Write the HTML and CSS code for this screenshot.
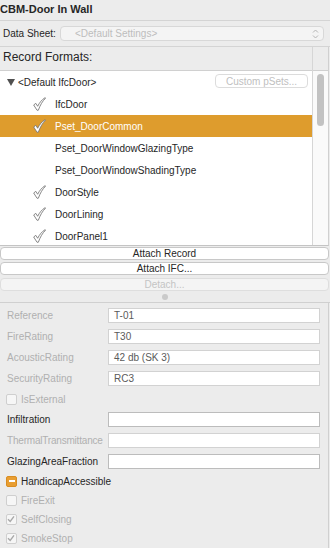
FILE: index.html
```html
<!DOCTYPE html>
<html>
<head>
    <meta charset="UTF-8">
    <title>CBM-Door In Wall</title>
    <link rel="stylesheet" href="styles.css">
</head>
<body>
    <div class="title">CBM-Door In Wall</div>

    <div class="sheet-row">
        <span class="sheet-label">Data Sheet:</span>
        <div class="popup">
            <span>&lt;Default Settings&gt;</span>
            <svg class="popup-arrows" width="7" height="12" viewBox="0 0 7 12">
                <path d="M1 4.5 L3.5 2 L6 4.5 M1 7.5 L3.5 10 L6 7.5" fill="none" stroke="#b5b5b5" stroke-width="1"/>
            </svg>
        </div>
    </div>

    <div class="list">
        <div class="list-main">
            <div class="list-header">Record Formats:</div>
            <div class="list-body">
                <div class="row">
                    <span class="triangle"></span>
                    <span class="row-text">&lt;Default IfcDoor&gt;</span>
                    <button class="custom-btn">Custom pSets...</button>
                </div>
                <div class="row"><span class="check"></span><span class="row-text">IfcDoor</span></div>
                <div class="row selected"><span class="check"></span><span class="row-text">Pset_DoorCommon</span></div>
                <div class="row"><span class="nocheck"></span><span class="row-text">Pset_DoorWindowGlazingType</span></div>
                <div class="row"><span class="nocheck"></span><span class="row-text">Pset_DoorWindowShadingType</span></div>
                <div class="row"><span class="check"></span><span class="row-text">DoorStyle</span></div>
                <div class="row"><span class="check"></span><span class="row-text">DoorLining</span></div>
                <div class="row"><span class="check"></span><span class="row-text">DoorPanel1</span></div>
            </div>
        </div>
        <div class="scroll-col">
            <div class="scroll-head"></div>
            <div class="scroll-track"><div class="thumb"></div></div>
        </div>
    </div>

    <div class="buttons">
        <button class="wide-btn">Attach Record</button>
        <button class="wide-btn">Attach IFC...</button>
        <button class="wide-btn disabled">Detach...</button>
    </div>
    <div class="splitter"><span class="dot"></span></div>

    <div class="fields">
        <div class="field"><span class="field-label dim">Reference</span><span class="input">T-01</span></div>
        <div class="field"><span class="field-label dim">FireRating</span><span class="input">T30</span></div>
        <div class="field"><span class="field-label dim">AcousticRating</span><span class="input">42 db (SK 3)</span></div>
        <div class="field"><span class="field-label dim">SecurityRating</span><span class="input">RC3</span></div>
        <div class="cb-row first dim"><span class="box"></span>IsExternal</div>
        <div class="field"><span class="field-label">Infiltration</span><span class="input edit"></span></div>
        <div class="field"><span class="field-label dim narrow">ThermalTransmittance</span><span class="input"></span></div>
        <div class="field"><span class="field-label">GlazingAreaFraction</span><span class="input edit"></span></div>
        <div class="cb-row"><span class="box mixed"></span>HandicapAccessible</div>
        <div class="cb-row dim"><span class="box"></span>FireExit</div>
        <div class="cb-row dim"><span class="box ticked"></span>SelfClosing</div>
        <div class="cb-row dim"><span class="box ticked"></span>SmokeStop</div>
    </div>

    <script>
        // draw the hand-written style check marks
        const checkSvg = '<svg width="13" height="14" viewBox="0 0 12 13">' +
            '<path d="M0.6 7.4 L2.6 5.9 L4.3 8.6 C6 5.2 8.2 2.4 11.3 0.6 L11.5 1.3 C8.9 3.6 6.7 7.4 4.9 12.3 L3.7 12.3 Z" ' +
            'fill="#ffffff" stroke="#767676" stroke-width="0.8" stroke-linejoin="round"/></svg>';
        document.querySelectorAll('.check').forEach(el => { el.innerHTML = checkSvg; });

        const tickSvg = '<svg width="10" height="10" viewBox="0 0 10 10">' +
            '<path d="M2 5.2 L4.2 7.4 L8 2.4" fill="none" stroke="#a8a8a8" stroke-width="1.4"/></svg>';
        document.querySelectorAll('.box.ticked').forEach(el => { el.innerHTML = tickSvg; });
    </script>
</body>
</html>
```

FILE: styles.css
```css
body {
    margin: 0;
    width: 330px;
    height: 548px;
    overflow: hidden;
    background-color: #ececec;
    color: #262626;
    font-family: "Liberation Sans", Arial, sans-serif;
    font-size: 10px;
}
button {
    font-family: inherit;
    font-size: 10px;
    padding: 0;
    margin: 0;
}
.title {
    height: 20px;
    line-height: 19px;
    font-weight: bold;
    font-size: 11px;
    border-bottom: 1px solid #d4d4d4;
}
.sheet-row {
    height: 25px;
    display: flex;
    align-items: center;
    border-bottom: 1px solid #d4d4d4;
}
.sheet-label {
    width: 53px;
    padding-left: 3px;
}
.popup {
    margin-left: 4px;
    height: 13px;
    border: 1px solid #d8d8d8;
    border-radius: 4px;
    background-color: #f4f4f4;
    color: #bdbdbd;
    display: flex;
    align-items: center;
    justify-content: space-between;
    padding-left: 14px;
    padding-right: 4px;
    width: 244px;
}
.popup-arrows {
    display: block;
}

/* record list */
.list {
    display: flex;
    width: 328px;
    height: 198px;
    border-right: 1px solid #d0d0d0;
    border-bottom: 1px solid #c4c4c4;
}
.list-main {
    width: 313px;
    display: flex;
    flex-direction: column;
}
.list-header {
    height: 23px;
    line-height: 21px;
    padding-left: 3px;
    font-size: 12px;
    border-bottom: 1px solid #d0d0d0;
}
.list-body {
    flex: 1;
    background-color: #fff;
    overflow: hidden;
}
.row {
    height: 22px;
    display: flex;
    align-items: center;
    position: relative;
}
.row.selected {
    background-color: #de9c2d;
    color: #fff;
}
.row-text {
    padding-top: 1px;
}
.triangle {
    width: 0;
    height: 0;
    margin-left: 7px;
    margin-right: 3px;
    border-left: 4px solid transparent;
    border-right: 4px solid transparent;
    border-top: 7px solid #505050;
}
.check, .nocheck {
    width: 13px;
    height: 14px;
    margin-left: 33px;
    margin-right: 9px;
}
.check svg {
    display: block;
}
.custom-btn {
    position: absolute;
    left: 215px;
    top: 3px;
    width: 93px;
    height: 14px;
    border: 1px solid #dcdcdc;
    border-radius: 4px;
    background-color: #fff;
    color: #c0c0c0;
}
.scroll-col {
    width: 15px;
    display: flex;
    flex-direction: column;
    border-left: 1px solid #d6d6d6;
}
.scroll-head {
    height: 23px;
    border-bottom: 1px solid #d0d0d0;
}
.scroll-track {
    flex: 1;
    background-color: #fafafa;
    padding-top: 3px;
}
.thumb {
    width: 7px;
    height: 52px;
    margin-left: 4px;
    border-radius: 4px;
    background-color: #c2c2c2;
}

/* buttons */
.buttons {
    display: flex;
    flex-direction: column;
    gap: 2px;
    padding-top: 1px;
}
.wide-btn {
    width: 329px;
    height: 13px;
    line-height: 11px;
    border: 1px solid #c8c8c8;
    border-radius: 4px;
    background-color: #fff;
    color: #262626;
}
.wide-btn.disabled {
    background-color: #f4f4f4;
    color: #c4c4c4;
    border-color: #dedede;
    margin-top: 1px;
}
.splitter {
    height: 11px;
    display: flex;
    justify-content: center;
    align-items: center;
    border-bottom: 1px solid #d0d0d0;
}
.dot {
    width: 6px;
    height: 6px;
    border-radius: 50%;
    background-color: #cacaca;
}

/* property fields */
.fields {
    width: 328px;
    height: 250px;
    border-right: 1px solid #d0d0d0;
    padding-top: 5px;
    display: flex;
    flex-direction: column;
    gap: 6px;
}
.field {
    height: 15px;
    display: flex;
    align-items: center;
}
.field-label {
    width: 101px;
    padding-left: 7px;
    color: #262626;
    white-space: nowrap;
}
.field-label.narrow {
    letter-spacing: -0.2px;
}
.dim {
    color: #b0b0b0;
}
.field-label.dim {
    color: #b0b0b0;
}
.input {
    width: 205px;
    height: 13px;
    line-height: 13px;
    padding-left: 5px;
    border: 1px solid #d2d2d2;
    background-color: #fff;
    color: #5a5a5a;
}
.input.edit {
    border-color: #bcbcbc;
}
.cb-row {
    height: 14px;
    display: flex;
    align-items: center;
    padding-left: 6px;
    margin-top: -1px;
}
.cb-row.first {
    margin-top: 0;
}
.box {
    width: 9px;
    height: 9px;
    margin-right: 4px;
    border: 1px solid #cfcfcf;
    border-radius: 2px;
    background-color: #f6f6f6;
    display: flex;
}
.box svg {
    display: block;
    margin: -1px 0 0 -1px;
}
.box.mixed {
    background-color: #e89e32;
    border-color: #d98d22;
    align-items: center;
    justify-content: center;
}
.box.mixed::after {
    content: "";
    width: 6px;
    height: 2px;
    background-color: #fff;
}
```
